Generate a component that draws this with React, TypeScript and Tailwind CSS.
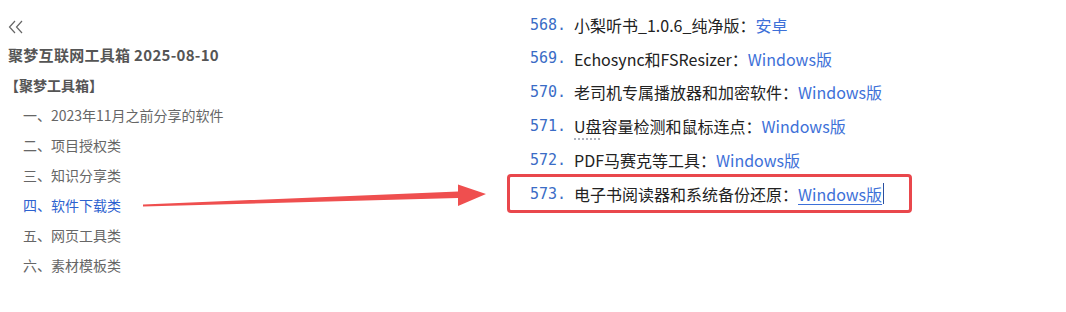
import React from 'react';

const cjk = "font-['Noto_Sans_CJK_SC','Noto_Sans',sans-serif]";

const sections = [
  { label: '一、2023年11月之前分享的软件' },
  { label: '二、项目授权类' },
  { label: '三、知识分享类' },
  { label: '四、软件下载类', active: true },
  { label: '五、网页工具类' },
  { label: '六、素材模板类' },
];

type Item = { no: number; title: React.ReactNode; link: string };

const items: Item[] = [
  { no: 568, title: '小梨听书_1.0.6_纯净版：', link: '安卓' },
  { no: 569, title: 'Echosync和FSResizer：', link: 'Windows版' },
  { no: 570, title: '老司机专属播放器和加密软件：', link: 'Windows版' },
  {
    no: 571,
    title: (
      <>
        <span className="underline decoration-dotted decoration-gray-400 underline-offset-[5px]">U盘</span>
        容量检测和鼠标连点：
      </>
    ),
    link: 'Windows版',
  },
  { no: 572, title: 'PDF马赛克等工具：', link: 'Windows版' },
];

const Row = ({ item, highlighted }: { item: Item; highlighted?: boolean }) => (
  <div
    className={`flex items-center h-[33.8px] pl-[20px] ${
      highlighted ? 'outline-3 outline-[#e9474c] rounded-[1px] h-[33px] mt-[0.4px]' : ''
    }`}
  >
    <span className="w-[44px] shrink-0 font-['DejaVu_Sans_Mono',monospace] text-[15px] text-[#3a6cc6]">
      {item.no}.
    </span>
    <span className="text-[16px] text-[#222]">{item.title}</span>
    <span className={`text-[16px] text-[#3d70d8] ${highlighted ? 'underline underline-offset-[3px]' : ''}`}>
      {item.link}
    </span>
    {highlighted && <span className="w-px h-[21px] bg-[#2a4fa0] ml-[1px]" />}
  </div>
);

export default function App() {
  return (
    <div className={`relative w-[1066px] h-[312px] bg-white overflow-hidden flex ${cjk}`}>
      <aside className="w-[510px] shrink-0 pl-2 pt-[18px] flex flex-col">
        <svg width="16" height="16" viewBox="0 0 16 16" className="text-[#666]">
          <polyline points="7,3 1.5,9 7,15" fill="none" stroke="currentColor" strokeWidth="1.2" />
          <polyline points="14,3 8.5,9 14,15" fill="none" stroke="currentColor" strokeWidth="1.2" />
        </svg>
        <div className="mt-[6px] h-[30px] flex items-center text-[15px] font-bold text-[#555] whitespace-nowrap tracking-[0.3px]">
          聚梦互联网工具箱 2025-08-10
        </div>
        <div className="h-[30px] flex items-center text-[14px] font-bold text-[#555] -ml-[3px]">【聚梦工具箱】</div>
        <ul className="pl-[15px]">
          {sections.map((s) => (
            <li
              key={s.label}
              className={`h-[30px] flex items-center text-[14px] ${s.active ? 'text-[#2d62cf]' : 'text-[#666]'}`}
            >
              {s.label}
            </li>
          ))}
        </ul>
      </aside>

      <main className="w-[399px] pt-[8px] flex flex-col">
        {items.map((it) => (
          <Row key={it.no} item={it} />
        ))}
        <Row item={{ no: 573, title: '电子书阅读器和系统备份还原：', link: 'Windows版' }} highlighted />
      </main>

      <svg className="absolute inset-0 pointer-events-none" width="1066" height="312">
        <polygon
          points="143,204.6 458,191.4 458,184.6 486,194 458,206 458,198 143,206.6"
          fill="#ef4f4f"
        />
      </svg>
    </div>
  );
}
